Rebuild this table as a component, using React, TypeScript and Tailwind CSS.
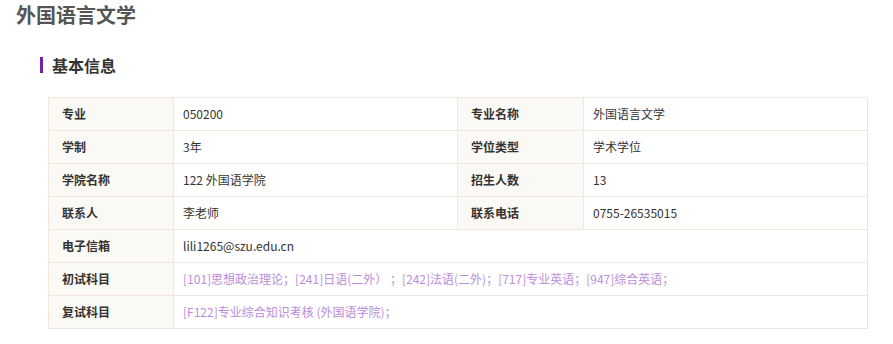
import React from "react";

const font = { fontFamily: '"Noto Sans CJK SC", "Noto Sans", sans-serif' };

function L({ children }: { children: React.ReactNode }) {
  return (
    <td className="h-[33px] border border-[#f1e6da] bg-[#fbf9f5] pl-[13px] text-[12px] font-bold text-[#333] leading-none">
      {children}
    </td>
  );
}
function V({ children, span, purple }: { children: React.ReactNode; span?: number; purple?: boolean }) {
  return (
    <td
      colSpan={span}
      className={`h-[33px] border border-[#f1e6da] bg-white pl-[9px] text-[12px] leading-none ${purple ? "text-[#bb8ddb]" : "text-[#333]"}`}
    >
      {children}
    </td>
  );
}

export default function App() {
  return (
    <div className="w-[893px] h-[344px] bg-white" style={font}>
      <div className="pl-[16px] pt-[3px] text-[20px] font-bold text-[#555] leading-[24px]">外国语言文学</div>
      <div className="mt-[30px] ml-[40px] flex items-center h-[16px]">
        <div className="w-[3px] h-[16px] bg-[#7b1fa2]" />
        <div className="ml-[9px] text-[16px] font-bold text-[#333] leading-none">基本信息</div>
      </div>
      <div className="ml-[48px] mt-[24px]">
        <table className="border-collapse table-fixed w-[819px]">
          <colgroup>
            <col className="w-[125px]" />
            <col className="w-[284px]" />
            <col className="w-[126px]" />
            <col className="w-[284px]" />
          </colgroup>
          <tbody>
            <tr>
              <L>专业</L>
              <V>050200</V>
              <L>专业名称</L>
              <V>外国语言文学</V>
            </tr>
            <tr>
              <L>学制</L>
              <V>3年</V>
              <L>学位类型</L>
              <V>学术学位</V>
            </tr>
            <tr>
              <L>学院名称</L>
              <V>122 外国语学院</V>
              <L>招生人数</L>
              <V>13</V>
            </tr>
            <tr>
              <L>联系人</L>
              <V>李老师</V>
              <L>联系电话</L>
              <V>0755-26535015</V>
            </tr>
            <tr>
              <L>电子信箱</L>
              <V span={3}>lili1265@szu.edu.cn</V>
            </tr>
            <tr>
              <L>初试科目</L>
              <V span={3} purple>
                [101]思想政治理论；[241]日语(二外） ；[242]法语(二外)；[717]专业英语；[947]综合英语；
              </V>
            </tr>
            <tr>
              <L>复试科目</L>
              <V span={3} purple>
                [F122]专业综合知识考核 (外国语学院)；
              </V>
            </tr>
          </tbody>
        </table>
      </div>
    </div>
  );
}
